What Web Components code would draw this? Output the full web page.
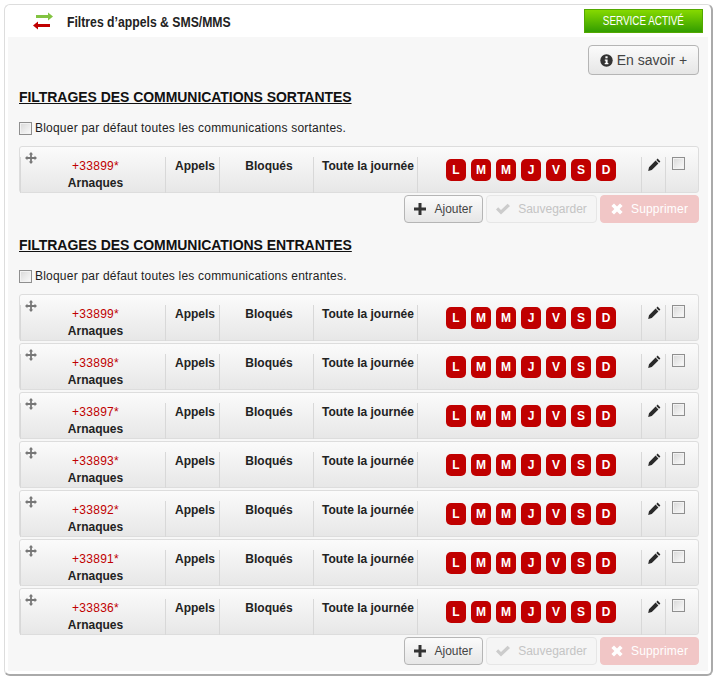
<!DOCTYPE html>
<html lang="fr">
<head>
<meta charset="utf-8">
<title>Filtres d'appels</title>
<style>
    html, body { margin: 0; padding: 0; background: #fff; }
    body { font-family: "Liberation Sans", Arial, sans-serif; font-size: 12px; color: #111; }
</style>
</head>
<body>
<filter-card>
    <filter-section title="Filtrages des communications sortantes" label="Bloquer par défaut toutes les communications sortantes.">
        <filter-row num="+33899*"></filter-row>
    </filter-section>
    <filter-section title="Filtrages des communications entrantes" label="Bloquer par défaut toutes les communications entrantes.">
        <filter-row num="+33899*"></filter-row>
        <filter-row num="+33898*"></filter-row>
        <filter-row num="+33897*"></filter-row>
        <filter-row num="+33893*"></filter-row>
        <filter-row num="+33892*"></filter-row>
        <filter-row num="+33891*"></filter-row>
        <filter-row num="+33836*"></filter-row>
    </filter-section>
</filter-card>

<script>
const ICONS = {
    info: '<svg width="13" height="13" viewBox="0 0 13 13"><circle cx="6.5" cy="6.5" r="6.2" fill="#333"/><rect x="5.4" y="2.3" width="2.2" height="2" fill="#fff"/><path d="M4.8 5.4h2.8v3.6h.8v1.3H4.7V9h.9V6.7h-.8z" fill="#fff"/></svg>',
    plus: '<svg width="12" height="12" viewBox="0 0 12 12"><path d="M4.5 0h3v4.5H12v3H7.5V12h-3V7.5H0v-3h4.5z" fill="#333"/></svg>',
    check: '<svg width="14" height="12" viewBox="0 0 14 12"><path d="M0 6.500l2.200-2.200 2.800 2.800L11.600.8 14 3 5 11.500z" fill="#ccc"/></svg>',
    cross: '<svg width="12" height="12" viewBox="0 0 12 12"><path d="M3 .4L6 3.400 9 .4l2.600 2.600-3 3 3 3L9 11.600l-3-3-3 3L.4 9l3-3-3-3z" fill="#fff"/></svg>',
    move: '<svg width="12" height="12" viewBox="0 0 12 12"><path d="M6 0l2.200 2.400H6.900v2.700h2.700V3.800L12 6 9.600 8.200V6.900H6.900v2.700h1.300L6 12 3.800 9.600h1.300V6.900H2.400v1.300L0 6l2.400-2.200v1.300h2.700V2.400H3.800z" fill="#777"/></svg>',
    pencil: '<svg width="13" height="13" viewBox="0 0 13 13"><path d="M9.600.6l2.800 2.800-1.300 1.300-2.800-2.800zM7.600 2.600l2.800 2.800-6.600 6.600-3.600.9.8-3.700z" fill="#2a2a2a"/></svg>',
    arrows: '<svg width="20" height="18" viewBox="0 0 20 18"><path d="M3 3h12V.5l5 4-5 4V6H3z" fill="#82c341"/><path d="M17 12H5V9.500l-5 4 5 4V15h12z" fill="#c00000"/></svg>'
};

const CHECKBOX_CSS = `
    input {
        appearance: none;
        display: block;
        box-sizing: border-box;
        margin: 0;
        width: 13px;
        height: 13px;
        border: 1px solid #8f8f8f;
        background: linear-gradient(135deg, #d8d8d8, #fbfbfb);
        box-shadow: inset 0 0 0 1px #f2f2f2;
    }
`;

class FilterCard extends HTMLElement {
    constructor() {
        super();
        this.attachShadow({ mode: 'open' });
        this.shadowRoot.innerHTML = `
            <style>
                :host {
                    display: block;
                    box-sizing: border-box;
                    width: 709px;
                    height: 672px;
                    margin: 4px 0 0 4px;
                    background: #fff;
                    border: 1px solid #ddd;
                    border-right: 2px solid #aaa;
                    border-bottom: 2px solid #aaa;
                    border-radius: 6px;
                    padding: 0 3px;
                }
                .head {
                    display: flex;
                    align-items: center;
                    height: 32px;
                }
                .arrows { display: flex; margin-left: 25px; width: 34px; }
                h1 {
                    margin: 0;
                    font: bold 15px "Liberation Sans", sans-serif;
                    color: #222;
                    transform: scaleX(.815);
                    transform-origin: left center;
                    white-space: nowrap;
                }
                .status {
                    margin-left: auto;
                    margin-right: 5px;
                    box-sizing: border-box;
                    width: 119px;
                    height: 24px;
                    text-align: center;
                    color: #fff;
                    border: 1px solid #52a800;
                    background: linear-gradient(#86d900, #339d00);
                }
                .status span {
                    display: inline-block;
                    font: 13px/22px "Liberation Sans", sans-serif;
                    transform: scaleX(.76);
                    white-space: nowrap;
                }
                .panel {
                    background: #f7f7f7;
                    height: 634px;
                    box-sizing: border-box;
                    padding: 8px 9px 0 11px;
                }
                .top { display: flex; justify-content: flex-end; }
            </style>
            <div class="head">
                <span class="arrows">${ICONS.arrows}</span>
                <h1>Filtres d’appels &amp; SMS/MMS</h1>
                <div class="status"><span>SERVICE ACTIVÉ</span></div>
            </div>
            <div class="panel">
                <div class="top"><ui-button big><span slot="icon">${ICONS.info}</span>En savoir +</ui-button></div>
                <slot></slot>
            </div>
        `;
    }
}

class UiButton extends HTMLElement {
    constructor() {
        super();
        this.attachShadow({ mode: 'open' });
        this.shadowRoot.innerHTML = `
            <style>
                :host {
                    display: inline-flex;
                    align-items: center;
                    justify-content: center;
                    gap: 8px;
                    box-sizing: border-box;
                    height: 28px;
                    padding: 0 10px;
                    border: 1px solid #b5b5b5;
                    border-radius: 4px;
                    background: linear-gradient(#fbfbfb, #e6e6e6);
                    color: #444;
                    font-size: 12px;
                }
                :host([big]) {
                    width: 111px;
                    height: 30px;
                    font-size: 14px;
                    gap: 4px;
                    padding: 0;
                }
                :host([save]) {
                    background: #f5f5f5;
                    border-color: #e6e6e6;
                    color: #c4c4c4;
                }
                :host([del]) {
                    background: #f1c6c6;
                    border-color: #f1c6c6;
                    color: #fff;
                    letter-spacing: 0.2px;
                }
                slot[name=icon]::slotted(*) { display: flex; }
            </style>
            <slot name="icon"></slot><slot></slot>
        `;
    }
}

class FilterSection extends HTMLElement {
    constructor() {
        super();
        this.attachShadow({ mode: 'open' });
    }

    connectedCallback() {
        this.shadowRoot.innerHTML = `
            <style>
                :host { display: block; }
                ${CHECKBOX_CSS}
                h2 {
                    margin: 14px 0 0;
                    font: bold 14px/16px "Liberation Sans", sans-serif;
                    color: #111;
                    text-transform: uppercase;
                    text-decoration: underline;
                    letter-spacing: -0.05px;
                }
                label {
                    display: flex;
                    align-items: center;
                    gap: 3px;
                    height: 18px;
                    margin: 14px 0 9px;
                    color: #222;
                    letter-spacing: 0.21px;
                }
                .rows { display: flex; flex-direction: column; }
                .actions { display: flex; justify-content: flex-end; gap: 3px; }
                .actions ui-button:nth-child(1) { width: 79px; }
                .actions ui-button:nth-child(2) { width: 111px; }
                .actions ui-button:nth-child(3) { width: 99px; }
            </style>
            <h2>${this.getAttribute('title')}</h2>
            <label><input type="checkbox"><span>${this.getAttribute('label')}</span></label>
            <div class="rows"><slot></slot></div>
            <div class="actions">
                <ui-button><span slot="icon">${ICONS.plus}</span>Ajouter</ui-button>
                <ui-button save><span slot="icon">${ICONS.check}</span>Sauvegarder</ui-button>
                <ui-button del><span slot="icon">${ICONS.cross}</span>Supprimer</ui-button>
            </div>
        `;
    }
}

class FilterRow extends HTMLElement {
    constructor() {
        super();
        this.attachShadow({ mode: 'open' });
    }

    connectedCallback() {
        const days = ['L', 'M', 'M', 'J', 'V', 'S', 'D'].map(d => `<b>${d}</b>`).join('');
        this.shadowRoot.innerHTML = `
            <style>
                :host {
                    display: grid;
                    grid-template-columns: 145px 54px 94px 104px 224px 24px 33px;
                    box-sizing: border-box;
                    width: 680px;
                    height: 47px;
                    margin-bottom: 2px;
                    padding-top: 10px;
                    border: 1px solid #ddd;
                    border-radius: 3px;
                    background: linear-gradient(#fbfbfb, #e7e7e7);
                    font-weight: bold;
                    color: #222;
                    position: relative;
                    text-align: center;
                    line-height: 17px;
                }
                ${CHECKBOX_CSS}
                .cell { border-left: 1px solid #d8d8d8; height: 36px; box-sizing: border-box; padding: 1px 0 0 5px; }
                .cell:first-child { border-left: 0; padding-left: 15px; }
                .num { color: #c00000; font-weight: normal; letter-spacing: 0.3px; }
                .move { position: absolute; left: 5px; top: 5px; display: flex; }
                .days { display: flex; gap: 5px; padding: 2px 0 0 28px; }
                .days b {
                    width: 20px;
                    height: 22px;
                    line-height: 22px;
                    border-radius: 5px;
                    background: #c00000;
                    color: #fff;
                }
                .edit { padding: 1px 0 0 6px; text-align: left; }
                .edit svg { display: block; }
                .sel { padding: 0 0 0 6px; text-align: left; }
            </style>
            <span class="move">${ICONS.move}</span>
            <div class="cell"><div class="num">${this.getAttribute('num')}</div>Arnaques</div>
            <div class="cell">Appels</div>
            <div class="cell">Bloqués</div>
            <div class="cell">Toute la journée</div>
            <div class="cell days">${days}</div>
            <div class="cell edit">${ICONS.pencil}</div>
            <div class="cell sel"><input type="checkbox"></div>
        `;
    }
}

customElements.define('ui-button', UiButton);
customElements.define('filter-card', FilterCard);
customElements.define('filter-section', FilterSection);
customElements.define('filter-row', FilterRow);
</script>
</body>
</html>
